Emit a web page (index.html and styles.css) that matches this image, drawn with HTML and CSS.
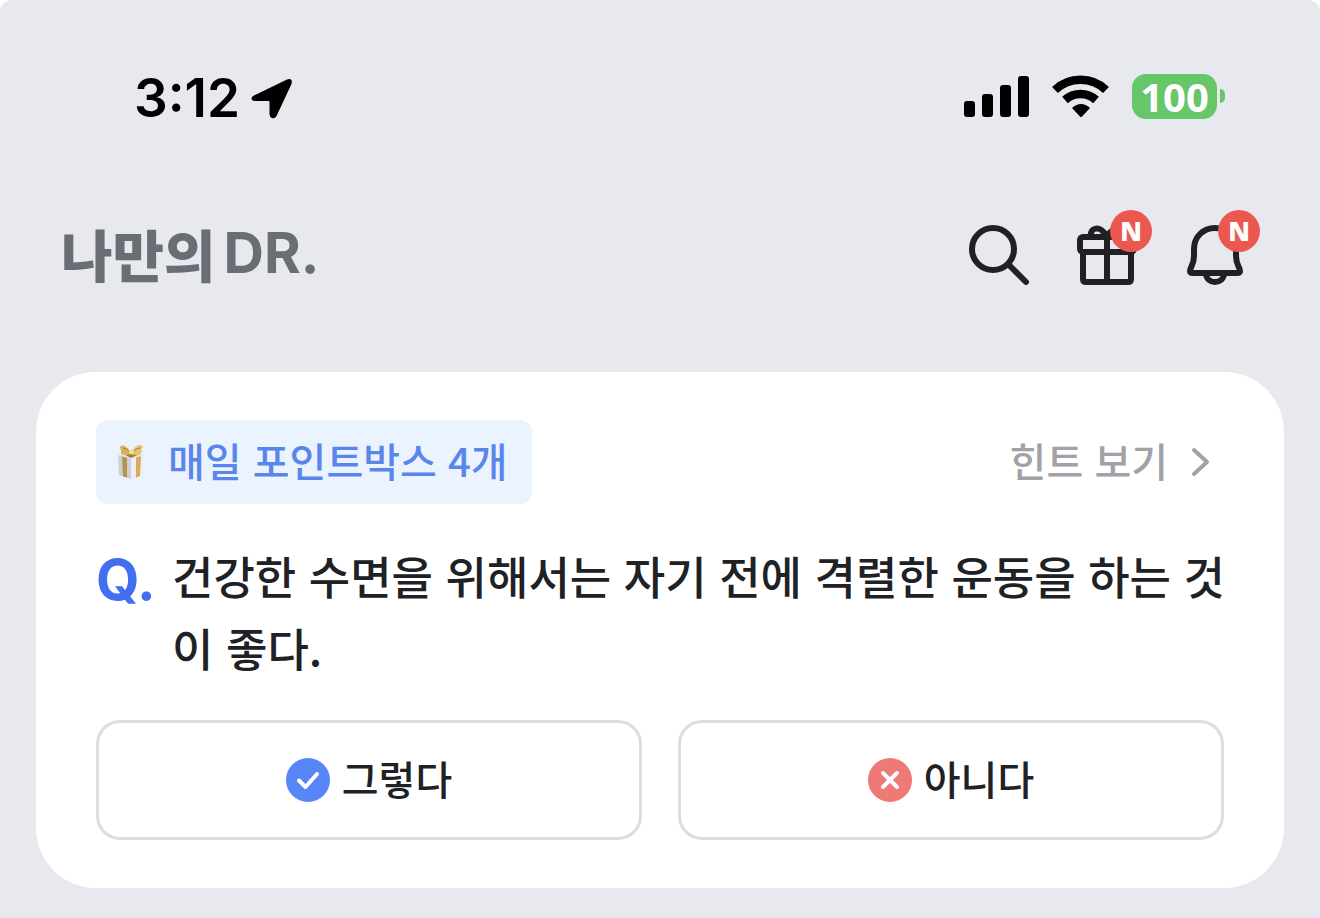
FILE: index.html
```html
<!DOCTYPE html>
<html lang="ko">
<head>
    <meta charset="UTF-8">
    <meta name="viewport" content="width=device-width, initial-scale=1.0">
    <title>나만의 DR.</title>
    <link rel="stylesheet" href="styles.css">
</head>
<body>
    <div class="screen">
        <div class="status-bar">
            <div class="status-left">
                <span class="time">3:12</span>
                <svg class="location" width="44" height="44" viewBox="0 0 44 44">
                    <path d="M4 19.500 L37 3.500 Q43 1.500 41.500 8 L26.500 40 Q24.500 43 22 42 Q19.500 41 19.500 38 V26 Q19.500 25 18.500 25 H5 Q1.500 24.500 1.500 22.500 Q1.500 20.500 4 19.500 Z"/>
                </svg>
            </div>
            <div class="status-right">
                <svg width="66" height="42" viewBox="0 0 66 42">
                    <rect x="0" y="26" width="11" height="16" rx="3"/>
                    <rect x="18" y="19" width="11" height="23" rx="3"/>
                    <rect x="36" y="10" width="11" height="32" rx="3"/>
                    <rect x="54" y="1" width="11" height="41" rx="3"/>
                </svg>
                <svg width="58" height="44" viewBox="0 0 58 44">
                    <g fill="none" stroke="#000" stroke-width="8.500">
                        <path d="M3 16 A37 37 0 0 1 54 16"/>
                        <path d="M13 26 A23 23 0 0 1 44 26"/>
                    </g>
                    <path d="M20 34 Q29 26 38 34 L30 42.500 Q29 43.500 28 42.500 Z"/>
                </svg>
                <div class="battery">
                    <span class="battery-level">100</span>
                    <span class="battery-cap"></span>
                </div>
            </div>
        </div>

        <header class="header">
            <h1 class="logo"><span class="logo-ko">나만의</span><span class="logo-dr">DR.</span></h1>
            <nav class="actions">
                <button class="icon-button" aria-label="검색">
                    <svg class="icon" viewBox="0 0 72 72">
                        <circle cx="30" cy="30" r="21"/>
                        <path d="M46 46 L63 63"/>
                    </svg>
                </button>
                <button class="icon-button" aria-label="선물">
                    <svg class="icon" viewBox="0 0 72 72">
                        <rect x="9" y="18" width="54" height="15" rx="3"/>
                        <path d="M12 33 V60 Q12 63 15 63 H57 Q60 63 60 60 V33"/>
                        <path d="M36 18 V63"/>
                        <path d="M20 18 C18 8 30 6 35 17 M37 17 C42 6 54 8 52 18"/>
                    </svg>
                    <span class="badge">N</span>
                </button>
                <button class="icon-button" aria-label="알림">
                    <svg class="icon" viewBox="0 0 72 72">
                        <path d="M36 9 C24 9 15 18 15 30 V37 C15 46 11 48 11 52 Q11 54 14 54 H58 Q61 54 61 52 C61 48 57 46 57 37 V30 C57 18 48 9 36 9 Z"/>
                        <path d="M27 54 C27 66 45 66 45 54"/>
                    </svg>
                    <span class="badge">N</span>
                </button>
            </nav>
        </header>

        <main class="card">
            <div class="card-top">
                <div class="tag">
                    <svg width="30" height="36" viewBox="0 0 30 36">
                        <path d="M2 11 L15 14 V35 L3 31 Z" fill="#cdd0da"/>
                        <path d="M15 14 L28 11 L27 31 L15 35 Z" fill="#eeedf6"/>
                        <path d="M6 12 L11 13 V33.500 L7 32.500 Z" fill="#b8934c"/>
                        <path d="M20 13 L25 12 L24 32 L20 33.500 Z" fill="#d2ad5c"/>
                        <path d="M2 11 L15 7 L28 11 L15 15 Z" fill="#e4e6ee"/>
                        <path d="M7 10 L15 7 L24 10 L15 14 Z" fill="#a98036"/>
                        <path d="M15 9 C10 0 4 0 4 4 C5 5 5 7 5 10 C9 12 12 11 15 9 Z" fill="#d9b158"/>
                        <path d="M15 9 C20 -1 26 0 27 3 C25 5 26 7 25 10 C21 12 18 11 15 9 Z" fill="#e6c46e"/>
                        <path d="M7 4 Q11 4 14 8 M24 4 Q20 4 17 8" fill="none" stroke="#a98036"/>
                        <circle cx="15.500" cy="8" r="2.500" fill="#f3dc99"/>
                    </svg>
                    <span class="label">매일 포인트박스 4개</span>
                </div>
                <a class="hint" href="#">
                    <span class="label">힌트 보기</span>
                    <svg width="20" height="30" viewBox="0 0 20 30">
                        <path d="M4 3 L17 15 L4 27"/>
                    </svg>
                </a>
            </div>

            <div class="question">
                <span class="q-mark">Q.</span>
                <p class="q-text">건강한 수면을 위해서는 자기 전에 격렬한 운동을 하는 것이 좋다.</p>
            </div>

            <div class="answers">
                <button class="answer">
                    <svg width="44" height="44" viewBox="0 0 44 44">
                        <circle cx="22" cy="22" r="22" fill="#5885f7"/>
                        <path d="M13 22.500 L19.500 29 L31 16" stroke-width="4"/>
                    </svg>
                    <span class="label">그렇다</span>
                </button>
                <button class="answer">
                    <svg width="44" height="44" viewBox="0 0 44 44">
                        <circle cx="22" cy="22" r="22" fill="#ee7975"/>
                        <path d="M15 15 L29 29 M29 15 L15 29" stroke-width="4"/>
                    </svg>
                    <span class="label">아니다</span>
                </button>
            </div>
        </main>
    </div>
</body>
</html>
```

FILE: styles.css
```css
* {
    box-sizing: border-box;
}
body {
    margin: 0;
    background-color: #fff;
    color: #202124;
    font-family: "Noto Sans CJK KR", sans-serif;
    font-size: 40px;
    font-weight: 500;
}
h1, p {
    margin: 0;
}
button {
    padding: 0;
    border: none;
    background: none;
    color: inherit;
    font: inherit;
    cursor: pointer;
}
svg {
    display: block;
    flex-shrink: 0;
}
.screen {
    min-height: 100vh;
    padding: 72px 36px 30px;
    background-color: #e8e9ee;
    border-radius: 12px 12px 0 0;
}

/* status bar */
.status-bar {
    display: flex;
    justify-content: space-between;
    align-items: center;
    height: 48px;
    padding: 0 59px 0 98px;
    color: #000;
    font-family: Inter, sans-serif;
}
.status-left {
    display: flex;
    align-items: center;
    gap: 10px;
    padding-top: 4px;
}
.time {
    font-size: 53px;
    font-weight: 600;
    line-height: 48px;
}
.status-right {
    display: flex;
    align-items: center;
    gap: 22px;
}
.battery {
    display: flex;
    align-items: center;
    gap: 3px;
}
.battery-level {
    width: 85px;
    border-radius: 14px;
    background-color: #67c56a;
    color: #fff;
    font-family: "Noto Sans", sans-serif;
    font-size: 40px;
    font-weight: 700;
    line-height: 45px;
    text-align: center;
}
.battery-cap {
    width: 5px;
    height: 14px;
    border-radius: 0 5px 5px 0;
    background-color: #67c56a;
}

/* header */
.header {
    display: flex;
    justify-content: space-between;
    align-items: center;
    height: 72px;
    margin-top: 99px;
    padding: 0 33px 0 25px;
}
.logo {
    display: flex;
    align-items: center;
    gap: 8px;
    padding-bottom: 4px;
    color: #6b6d74;
    line-height: 68px;
}
.logo-ko {
    font-size: 56px;
    font-weight: 900;
}
.logo-dr {
    font-family: Inter, sans-serif;
    font-size: 56px;
    font-weight: 700;
}
.actions {
    display: flex;
    gap: 36px;
}
.icon-button {
    position: relative;
    width: 72px;
    height: 72px;
}
.icon {
    width: 72px;
    height: 72px;
    fill: none;
    stroke: #202124;
    stroke-width: 6;
    stroke-linecap: round;
    stroke-linejoin: round;
}
.badge {
    position: absolute;
    top: -9px;
    right: -9px;
    width: 42px;
    height: 42px;
    border-radius: 50%;
    background-color: #eb5850;
    color: #fff;
    font-family: "Open Sans", sans-serif;
    font-size: 26px;
    font-weight: 800;
    line-height: 42px;
    text-align: center;
}

/* quiz card */
.card {
    margin-top: 81px;
    padding: 48px 60px;
    border-radius: 60px;
    background-color: #fff;
}
.card-top {
    display: flex;
    justify-content: space-between;
    align-items: center;
}
.label {
    padding-bottom: 4px;
    line-height: 60px;
}
.tag {
    display: flex;
    align-items: center;
    gap: 22px;
    height: 84px;
    padding: 0 24px 0 20px;
    border-radius: 12px;
    background-color: #ebf4fe;
    color: #5a86ec;
}
.hint {
    display: flex;
    align-items: center;
    gap: 22px;
    padding-right: 14px;
    color: #a0a2a8;
    text-decoration: none;
}
.hint path {
    fill: none;
    stroke: #a0a2a8;
    stroke-width: 4;
    stroke-linecap: round;
    stroke-linejoin: round;
}
.question {
    display: flex;
    margin: 36px -12px 36px 0;
    line-height: 72px;
}
.q-mark {
    flex: 0 0 76px;
    padding-top: 4px;
    color: #426ff2;
    font-family: Inter, sans-serif;
    font-size: 56px;
    font-weight: 700;
}
.q-text {
    flex: 1;
    font-size: 45px;
}
.answers {
    display: grid;
    grid-template-columns: 1fr 1fr;
    gap: 36px;
}
.answer {
    display: flex;
    justify-content: center;
    align-items: center;
    gap: 12px;
    height: 120px;
    border: 3px solid #dcdde0;
    border-radius: 24px;
}
.answer path {
    fill: none;
    stroke: #fff;
    stroke-linecap: round;
    stroke-linejoin: round;
}
```
